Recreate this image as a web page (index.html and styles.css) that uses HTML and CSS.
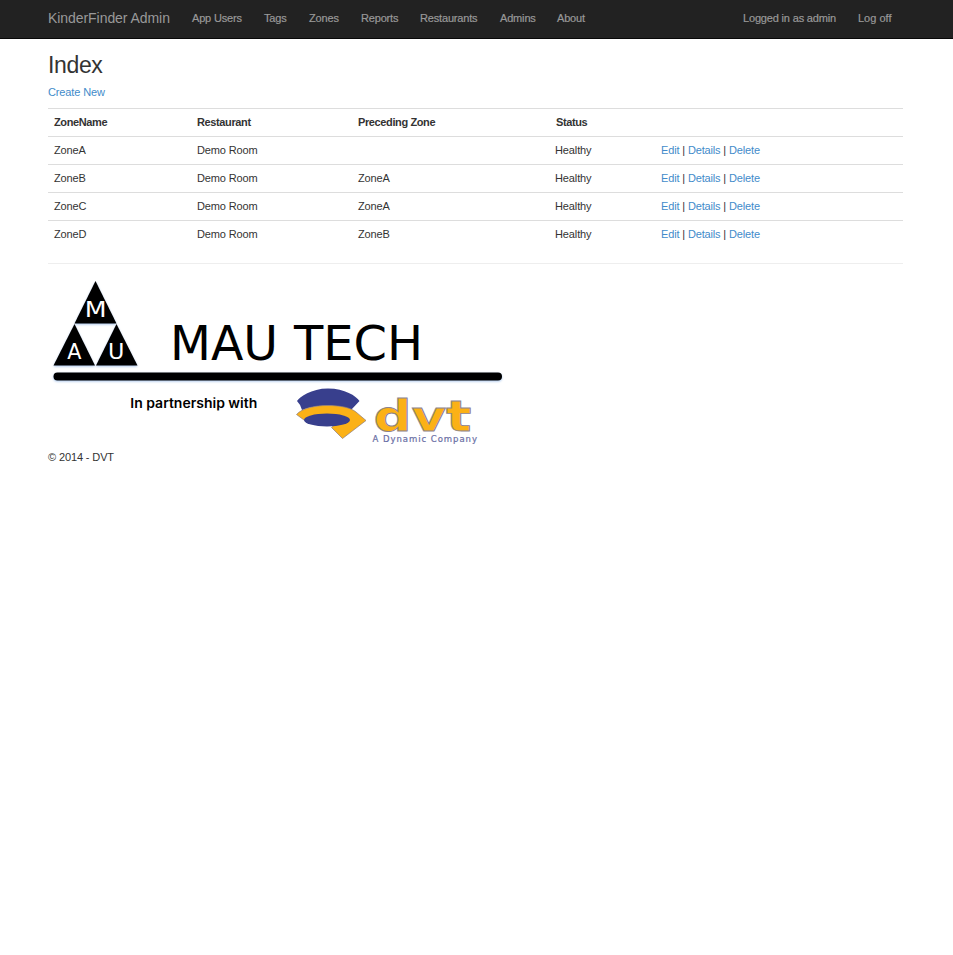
FILE: index.html
```html
<!DOCTYPE html>
<html lang="en">
<head>
<meta charset="utf-8">
<title>Index - KinderFinder Admin</title>
<link rel="stylesheet" href="styles.css">
</head>
<body>
<nav class="navbar">
  <div class="container navbar-inner">
    <a class="brand" href="#">KinderFinder Admin</a>
    <ul class="nav">
      <li class="n1"><a href="#">App Users</a></li>
      <li class="n2"><a href="#">Tags</a></li>
      <li class="n3"><a href="#">Zones</a></li>
      <li class="n4"><a href="#">Reports</a></li>
      <li class="n5"><a href="#">Restaurants</a></li>
      <li class="n6"><a href="#">Admins</a></li>
      <li class="n7"><a href="#">About</a></li>
    </ul>
    <ul class="nav nav-right">
      <li class="n8"><a href="#">Logged in as admin</a></li>
      <li class="n9"><a href="#">Log off</a></li>
    </ul>
  </div>
</nav>
<main class="container">
  <h2>Index</h2>
  <p class="create"><a href="#">Create New</a></p>
  <table class="table">
    <colgroup><col class="c-name"><col class="c-rest"><col class="c-prec"><col class="c-status"><col></colgroup>
    <tr><th>ZoneName</th><th>Restaurant</th><th>Preceding Zone</th><th class="th-status">Status</th><th></th></tr>
    <tr><td>ZoneA</td><td>Demo Room</td><td></td><td>Healthy</td><td><a href="#">Edit</a> | <a href="#">Details</a> | <a href="#">Delete</a></td></tr>
    <tr><td>ZoneB</td><td>Demo Room</td><td>ZoneA</td><td>Healthy</td><td><a href="#">Edit</a> | <a href="#">Details</a> | <a href="#">Delete</a></td></tr>
    <tr><td>ZoneC</td><td>Demo Room</td><td>ZoneA</td><td>Healthy</td><td><a href="#">Edit</a> | <a href="#">Details</a> | <a href="#">Delete</a></td></tr>
    <tr><td>ZoneD</td><td>Demo Room</td><td>ZoneB</td><td>Healthy</td><td><a href="#">Edit</a> | <a href="#">Details</a> | <a href="#">Delete</a></td></tr>
  </table>
  <hr>
  <footer>
    <svg class="logo" width="460" height="173" viewBox="48 277 460 173">
      <g class="shade">
        <path d="M95.5 281 116.500 323.500H74.500z"/>
        <path d="M74.5 324 95 365.500H53.500z"/>
        <path d="M116.500 324 137.500 365.500H96z"/>
        <rect x="53.500" y="372.500" width="448.500" height="8" rx="4"/>
      </g>
      <text class="tri" x="84.800" y="316.500" textLength="21.800" lengthAdjust="spacingAndGlyphs">M</text>
      <text class="tri" x="67.200" y="358.500" textLength="14.200" lengthAdjust="spacingAndGlyphs">A</text>
      <text class="tri" x="108" y="358.500" textLength="16.400" lengthAdjust="spacingAndGlyphs">U</text>
      <text class="mau" x="170" y="360" textLength="108" lengthAdjust="spacingAndGlyphs">MAU</text>
      <text class="mau" x="294" y="360" textLength="129" lengthAdjust="spacingAndGlyphs">TECH</text>
      <text class="partner" x="130.300" y="408" textLength="127" lengthAdjust="spacingAndGlyphs">In partnership with</text>
      <g class="mark">
        <path class="blue" d="M297 401C300 397 311 388.500 328 388.500S356 396 359.500 401L351 410C340 405 318 404 302 410Q301 405 297 401Z"/>
        <path class="gold" d="M296.500 414.500C302 408 316 405.500 327 405.500C342 405.500 351 408 356 412L366 420.500 342.500 438.500 331.500 427.500L340 420H304Z"/>
        <ellipse class="blue" cx="327" cy="420" rx="23" ry="6.500"/>
      </g>
      <text class="dvt" x="373.500" y="430.500" textLength="98" lengthAdjust="spacingAndGlyphs">dvt</text>
      <text class="tag" x="372.500" y="441.500" textLength="104.500">A Dynamic Company</text>
    </svg>
    <p class="copy">© 2014 - DVT</p>
  </footer>
</main>
</body>
</html>
```
FILE: styles.css
```css
* { box-sizing: border-box; }
body { margin: 0; background: #fff; color: #333; font: 11px/15px "Liberation Sans", Arial, sans-serif; letter-spacing: -.12px; }
a { color: #428bca; text-decoration: none; }
.container { width: 855px; margin-left: 48px; }
.navbar { height: 39px; background: #222; border-bottom: 1px solid #080808; }
.navbar-inner { display: flex; height: 38px; align-items: center; }
.navbar a { color: #999; white-space: nowrap; }
.brand { width: 144px; font-size: 14px; letter-spacing: -.06px; padding-bottom: 1px; }
.nav { display: flex; list-style: none; margin: 0; padding: 0 0 1px; letter-spacing: -.17px; -webkit-text-stroke: .2px #999; }
.nav-right { margin-left: auto; }
.n1 { width: 72px; }
.n2 { width: 45px; }
.n3 { width: 52px; }
.n4 { width: 59px; }
.n5 { width: 80px; }
.n6 { width: 57px; }
.n8 { width: 115px; }
.n9 { width: 45px; letter-spacing: 0; }
h2 { margin: 13px 0 7px; font-size: 23px; font-weight: 400; line-height: 26px; letter-spacing: -.35px; }
.create { margin: 0 0 8px; }
.table { width: 855px; table-layout: fixed; border-collapse: collapse; }
.table th, .table td { height: 28px; padding: 0 6px; border-top: 1px solid #ddd; text-align: left; vertical-align: middle; white-space: nowrap; }
.table th { letter-spacing: -.38px; }
.table td:last-child { letter-spacing: -.15px; }
.table .th-status { padding-left: 7px; }
.c-name { width: 143px; }
.c-rest { width: 161px; }
.c-prec { width: 197px; }
.c-status { width: 106px; }
hr { margin: 14px 0 13px; border: 0; border-top: 1px solid #eee; }
.logo { display: block; letter-spacing: 0; }
.copy { margin: 0; }
.shade { filter: drop-shadow(0 1px .8px #a9c6ec); }
.tri { font: 20.500px "DejaVu Sans", sans-serif; fill: #fff; }
.mau { font: 48px "DejaVu Sans", sans-serif; fill: #000; }
.partner { font: 600 13px "Inter", sans-serif; fill: #000; }
.blue { fill: #383f8d; }
.gold { fill: #fbb116; stroke: #8b7c80; stroke-width: .7; }
.dvt { font: 700 43px "DejaVu Sans", sans-serif; fill: #fbb116; stroke: #8b8390; stroke-width: .9; }
.tag { font: 8.500px "DejaVu Sans", sans-serif; fill: #6a6fa5; stroke: #6a6fa5; stroke-width: .2; }
```
